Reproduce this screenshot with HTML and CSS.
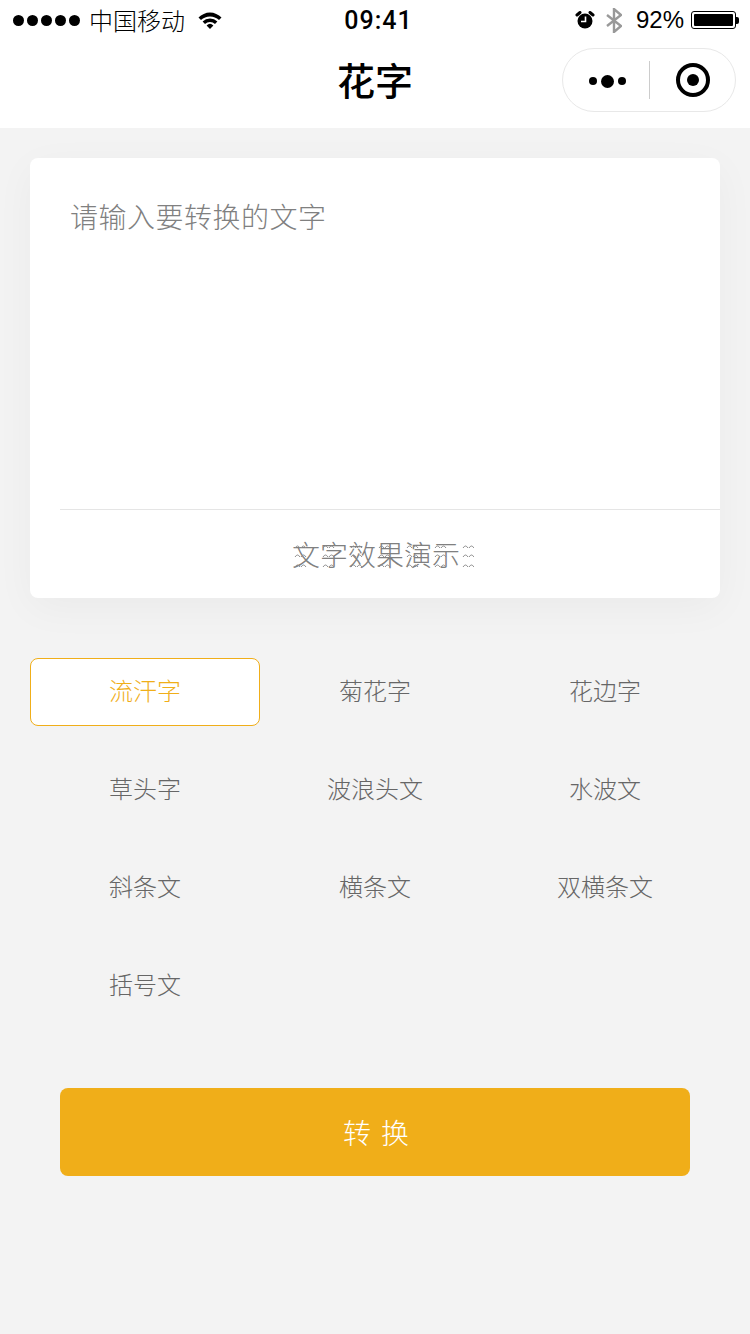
FILE: index.html
```html
<!DOCTYPE html>
<html lang="en">
<head>
    <meta charset="UTF-8">
    <meta name="viewport" content="width=device-width, initial-scale=1.0">
    <title>花字</title>
    <link rel="stylesheet" href="styles.css">
</head>
<body>
    <div class="status-bar">
        <div class="status-left">
            <div class="signal"><span></span><span></span><span></span><span></span><span></span></div>
            <span class="carrier">中国移动</span>
            <svg class="wifi" width="24" height="18" viewBox="0 0 24 18">
                <path d="M0.5 6.5 A16 16 0 0 1 23.5 6.5 L21 9 A13 13 0 0 0 3 9 Z" fill="#000"/>
                <path d="M4.6 10.6 A10.5 10.5 0 0 1 19.4 10.6 L17 13 A7.2 7.2 0 0 0 7 13 Z" fill="#000"/>
                <path d="M8.6 14.4 A5 5 0 0 1 15.4 14.4 L12 18 Z" fill="#000"/>
            </svg>
        </div>
        <div class="status-time">09:41</div>
        <div class="status-right">
            <svg class="alarm" width="20" height="18" viewBox="0 0 20 18">
                <circle cx="10" cy="10" r="7.5" fill="#000"/>
                <path d="M2 4 L5 1.5 M15 1.5 L18 4" stroke="#000" stroke-width="3" stroke-linecap="round"/>
                <path d="M10.5 5.5 V10.5 H6" stroke="#fff" stroke-width="1.6" fill="none"/>
            </svg>
            <svg class="bluetooth" width="16" height="25" viewBox="0 0 16 25">
                <path d="M1 7 L15 18 L8 24 V1 L15 7 L1 18" stroke="#999" stroke-width="2.4" fill="none"/>
            </svg>
            <span class="battery-text">92%</span>
            <div class="battery"><div class="battery-level"></div></div>
            <div class="battery-tip"></div>
        </div>
    </div>

    <div class="nav-bar">
        <h1 class="nav-title">花字</h1>
        <div class="capsule">
            <div class="capsule-more"><span></span><span class="big"></span><span></span></div>
            <div class="capsule-line"></div>
            <div class="capsule-close"><span></span></div>
        </div>
    </div>

    <div class="main">
        <div class="card">
            <div class="input-text">请输入要转换的文字</div>
            <div class="demo">
                <span class="demo-text">文字效果演示
                    <!-- the little sweat drops on the demo text -->
                    <svg class="demo-marks" width="182" height="40">
                        <defs>
                            <pattern id="sweat" width="28" height="40" patternUnits="userSpaceOnUse">
                                <path d="M3 14 q2.5 -4 5 0 M9 14 q2.5 -4 5 0 M3 23 q2.5 -4 5 0 M9 23 q2.5 -4 5 0 M3 33 q2.5 -4 5 0 M9 33 q2.5 -4 5 0" stroke="#8c8c8c" fill="none"/>
                            </pattern>
                        </defs>
                        <rect width="182" height="40" fill="url(#sweat)"/>
                    </svg>
                </span>
            </div>
        </div>

        <div class="styles">
            <div class="style-item active">流汗字</div>
            <div class="style-item">菊花字</div>
            <div class="style-item">花边字</div>
            <div class="style-item">草头字</div>
            <div class="style-item">波浪头文</div>
            <div class="style-item">水波文</div>
            <div class="style-item">斜条文</div>
            <div class="style-item">横条文</div>
            <div class="style-item">双横条文</div>
            <div class="style-item">括号文</div>
        </div>

        <button class="convert-btn">转 换</button>
    </div>
</body>
</html>
```

FILE: styles.css
```css
body {
    margin: 0;
    padding: 0;
    min-height: 1334px;
    font-family: "Noto Sans CJK SC", "Liberation Sans", sans-serif;
    background-color: #f3f3f3;
}

.status-bar {
    height: 40px;
    display: flex;
    align-items: center;
    justify-content: space-between;
    background-color: #fff;
    color: #000;
    padding: 0 11px 0 13px;
    position: relative;
}

.status-left, .status-right {
    display: flex;
    align-items: center;
}

.signal {
    display: flex;
    gap: 3px;
}

.signal span {
    width: 11px;
    height: 11px;
    border-radius: 50%;
    background-color: #000;
}

.carrier {
    font-size: 24px;
    font-weight: 300;
    line-height: 40px;
    margin-left: 9px;
}

.wifi {
    margin-left: 13px;
}

.status-time {
    position: absolute;
    left: 7px;
    right: 0;
    text-align: center;
    font-family: "Roboto", sans-serif;
    font-size: 25px;
    font-weight: 500;
    letter-spacing: 1px;
}

.bluetooth {
    margin-left: 11px;
}

.battery-text {
    font-family: "Liberation Sans", sans-serif;
    font-size: 24px;
    margin-left: 14px;
}

.battery {
    width: 45px;
    height: 18px;
    border: 1px solid #000;
    border-radius: 3px;
    padding: 2px;
    box-sizing: border-box;
    margin-left: 7px;
}

.battery-level {
    width: 39px;
    height: 12px;
    border-radius: 1px;
    background-color: #000;
}

.battery-tip {
    width: 3px;
    height: 7px;
    background-color: #000;
    border-radius: 0 2px 2px 0;
}

.nav-bar {
    height: 88px;
    display: flex;
    align-items: center;
    justify-content: center;
    background-color: #fff;
    position: relative;
}

.nav-title {
    margin: 0;
    font-size: 38px;
    font-weight: 500;
    color: #000;
    line-height: 78px;
    padding-bottom: 10px;
}

.capsule {
    position: absolute;
    top: 8px;
    right: 14px;
    width: 174px;
    height: 64px;
    box-sizing: border-box;
    border: 1px solid #e8e8e8;
    border-radius: 32px;
    display: flex;
    align-items: center;
}

.capsule-more {
    width: 84px;
    padding: 2px 0 0 2px;
    display: flex;
    align-items: center;
    justify-content: center;
    gap: 4px;
}

.capsule-more span {
    width: 8px;
    height: 8px;
    border-radius: 50%;
    background-color: #000;
}

.capsule-more span.big {
    width: 13px;
    height: 13px;
}

.capsule-line {
    width: 1px;
    height: 38px;
    background-color: #ccc;
}

.capsule-close {
    flex: 1;
    display: flex;
    justify-content: center;
}

.capsule-close span {
    width: 34px;
    height: 34px;
    box-sizing: border-box;
    border: 4px solid #000;
    border-radius: 50%;
    display: flex;
    align-items: center;
    justify-content: center;
}

.capsule-close span::after {
    content: "";
    width: 12px;
    height: 12px;
    border-radius: 50%;
    background-color: #000;
}

.main {
    padding: 30px 30px 0;
}

.card {
    height: 440px;
    background-color: #fff;
    border-radius: 8px;
    box-shadow: 0 10px 40px rgba(0, 0, 0, 0.04);
    display: flex;
    flex-direction: column;
}

.input-text {
    flex: 1;
    padding: 38px 40px 0;
    font-size: 28px;
    font-weight: 300;
    line-height: 40px;
    letter-spacing: 0.5px;
    color: #808080;
}

.demo {
    height: 88px;
    margin-left: 30px;
    border-top: 1px solid #e5e5e5;
    display: flex;
    align-items: center;
    justify-content: center;
    padding-right: 28px;
    font-size: 28px;
    font-weight: 300;
    color: #808080;
}

.demo-text {
    position: relative;
    line-height: 40px;
}

.demo-marks {
    position: absolute;
    left: 0;
    top: 0;
}

.styles {
    display: grid;
    grid-template-columns: repeat(3, 230px);
    justify-content: space-between;
    row-gap: 30px;
    margin-top: 60px;
}

.style-item {
    height: 68px;
    line-height: 62px;
    box-sizing: border-box;
    border: 1px solid transparent;
    border-radius: 8px;
    text-align: center;
    font-size: 24px;
    font-weight: 300;
    color: #666;
}

.style-item.active {
    background-color: #fff;
    border-color: #f0ae19;
    color: #f0ae19;
}

.convert-btn {
    display: block;
    width: 630px;
    height: 88px;
    margin: 68px auto 0;
    padding-left: 10px;
    background-color: #f0ae19;
    color: #fff;
    border: none;
    border-radius: 8px;
    font-family: inherit;
    font-size: 28px;
    font-weight: 300;
    letter-spacing: 2px;
}
```
